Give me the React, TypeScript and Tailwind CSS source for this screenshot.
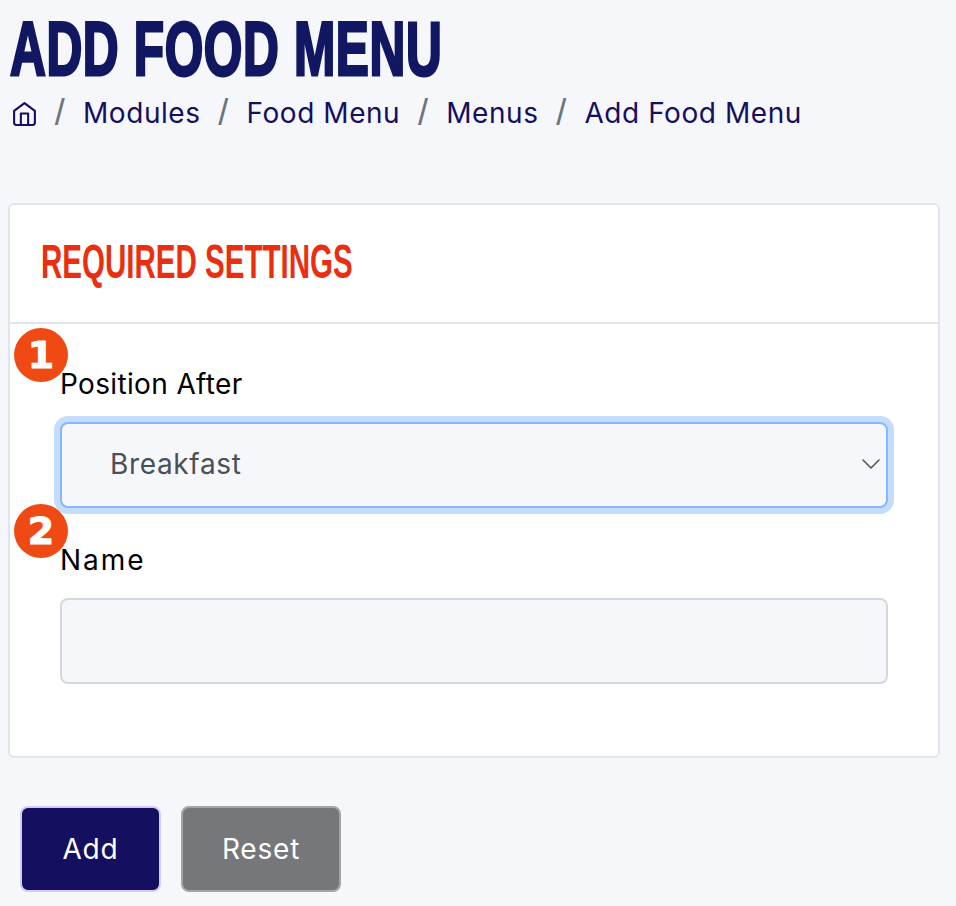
import React from "react";

const sans = "font-['Inter','Noto_Sans',sans-serif]";

function Sep() {
  return <span className="w-[46px] text-center font-['Liberation_Sans',sans-serif] text-[36px] font-light leading-none text-[#6c757d]">/</span>;
}

function Badge({ n }: { n: string }) {
  return (
    <span className="absolute left-[-46px] top-[-38px] flex h-[54px] w-[54px] items-center justify-center rounded-full bg-[#f04a14] font-['DejaVu_Sans',sans-serif] text-[38px] font-bold leading-none tracking-normal text-white [-webkit-text-stroke:1px_#ffffff]">
      {n}
    </span>
  );
}

export default function App() {
  return (
    <div className={`min-h-[906px] w-[956px] overflow-hidden bg-[#f5f7fb] ${sans}`}>
      <div className="h-[203px] pl-[10px] pt-[10px]">
        <h1 className="h-[78px] w-max origin-left scale-x-[0.652] font-['Liberation_Sans',sans-serif] text-[76px] font-bold leading-[78px] tracking-[1px] text-[#111761] [-webkit-text-stroke:3px_#111761]">
          ADD FOOD MENU
        </h1>
        <nav className="mt-[5px] flex h-[40px] items-center pl-[2px] text-[28px] tracking-[0.55px] text-[#140f5f]">
          <svg width="25" height="27" viewBox="0 0 24 26" fill="none" stroke="#140f5f" strokeWidth="2" strokeLinecap="round" strokeLinejoin="round">
            <path d="M2 10.5 12 3l10 7.5V22a2 2 0 0 1-2 2H4a2 2 0 0 1-2-2z" />
            <path d="M8.5 24V13h7v11" />
          </svg>
          <Sep />
          <span>Modules</span>
          <Sep />
          <span>Food Menu</span>
          <Sep />
          <span>Menus</span>
          <Sep />
          <span>Add Food Menu</span>
        </nav>
      </div>

      <section className="ml-[8px] h-[555px] w-[932px] rounded-[6px] border-2 border-[#e3e5ec] bg-white">
        <div className="flex h-[119px] items-center border-b-2 border-[#e3e5ec] pb-[4px] pl-[31px]">
          <h2 className="w-max origin-left scale-x-[0.615] font-['Liberation_Sans',sans-serif] text-[48px] font-bold leading-none text-[#e92f0f]">
            REQUIRED SETTINGS
          </h2>
        </div>
        <div className="px-[50px] pt-[42px]">
          <label className="relative block text-[28px] leading-[36px] tracking-[0.35px] text-black">
            <Badge n="1" />
            Position After
          </label>
          <div className="mt-[20px] flex h-[86px] w-[828px] items-center justify-between rounded-[8px] border-2 border-[#86b7fe] bg-[#f5f7fb] pb-[2px] pl-[48px] pr-[5px] text-[28px] tracking-[0.65px] text-[#495057] shadow-[0_0_0_6px_#c6dcfb]">
            <span>Breakfast</span>
            <svg width="20" height="12" viewBox="0 0 20 12" fill="none" stroke="#4f545c" strokeWidth="1.6" strokeLinecap="round" strokeLinejoin="round">
              <path d="M2 2l8 8 8-8" />
            </svg>
          </div>
          <label className="relative mt-[34px] block text-[28px] leading-[36px] tracking-[2px] text-black">
            <Badge n="2" />
            Name
          </label>
          <input
            readOnly
            className="mt-[20px] block h-[86px] w-[828px] rounded-[8px] border-2 border-[#d4d7dd] bg-[#f5f7fb]"
          />
        </div>
      </section>

      <div className="ml-[20px] mt-[48px] flex gap-[20px] text-[28px] tracking-[0.8px]">
        <button className="h-[86px] w-[141px] rounded-[8px] border-2 border-[#cfcdf5] bg-[#140f5f] text-white">Add</button>
        <button className="h-[86px] w-[160px] rounded-[8px] border-2 border-[#a4a5a9] bg-[#76777b] text-white">Reset</button>
      </div>
    </div>
  );
}
